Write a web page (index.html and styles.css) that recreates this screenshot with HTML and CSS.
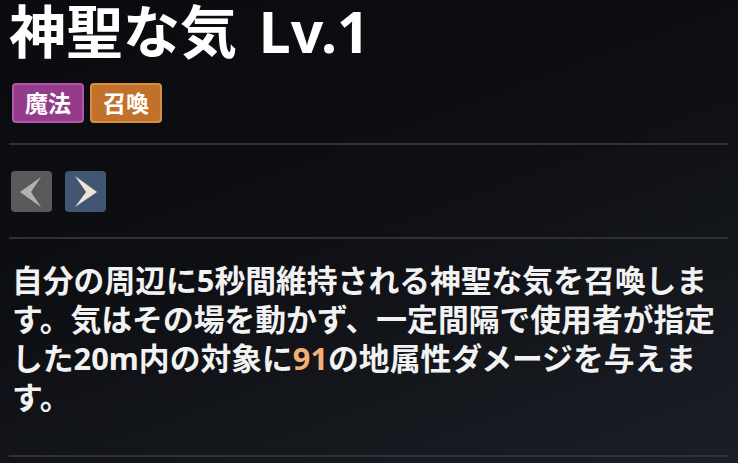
FILE: index.html
```html
<!DOCTYPE html>
<html lang="ja">
<head>
<meta charset="utf-8">
<title>神聖な気 Lv.1</title>
<link rel="stylesheet" href="styles.css">
</head>
<body>
<div class="card">
  <h1 class="title">神聖な気 Lv.1</h1>
  <div class="tags">
    <span class="tag tag-magic">魔法</span>
    <span class="tag tag-summon">召喚</span>
  </div>
  <div class="sep"></div>
  <div class="nav">
    <button class="nav-btn nav-prev" aria-label="前へ">
      <svg width="41" height="41" viewBox="0 0 41 41"><polygon points="30,6 9,21 30,36 20,21" fill="#b3b3b3"/></svg>
    </button>
    <button class="nav-btn nav-next" aria-label="次へ">
      <svg width="41" height="41" viewBox="0 0 41 41"><polygon points="10,5 32,21 10,36 21,21" fill="#ebe5d6"/></svg>
    </button>
  </div>
  <div class="sep"></div>
  <p class="desc">自分の周辺に5秒間維持される神聖な気を召喚します。気はその場を動かず、一定間隔で使用者が指定した20m内の対象に<span class="num">91</span>の地属性ダメージを与えます。</p>
  <div class="sep"></div>
</div>
</body>
</html>
```

FILE: styles.css
```css
html, body {
  margin: 0;
  padding: 0;
  height: 100%;
}
body {
  background: linear-gradient(160deg, #0a0b0e 0%, #0d0f13 45%, #1b1e25 100%);
  font-family: "Noto Sans", "Noto Sans CJK JP", sans-serif;
  color: #f2f2f2;
  overflow: hidden;
}
.card {
  padding: 0 10px 0 9px;
  display: flex;
  flex-direction: column;
}
.title {
  margin: 0;
  font-size: 57px;
  line-height: 62px;
  font-weight: 700;
  color: #ffffff;
  white-space: nowrap;
  word-spacing: 7px;
}
.tags {
  display: flex;
  gap: 6px;
  margin: 21px 0 0 3px;
}
.tag {
  display: inline-block;
  height: 36px;
  line-height: 36px;
  padding: 0 11px;
  border: 2px solid;
  border-radius: 4px;
  font-size: 23px;
  font-weight: 700;
  color: #ffffff;
}
.tag-magic {
  background: #943b8b;
  border-color: #b357a8;
}
.tag-summon {
  background: #c1712a;
  border-color: #d98e3f;
}
.sep {
  height: 2px;
  background: #2f3136;
}
.tags + .sep {
  margin-top: 20px;
}
.nav {
  display: flex;
  gap: 13px;
  margin: 26px 0 25px 2px;
}
.nav-btn {
  width: 41px;
  height: 41px;
  padding: 0;
  border: none;
  border-radius: 4px;
  display: flex;
  align-items: center;
  justify-content: center;
}
.nav-btn svg {
  display: block;
}
.nav-prev {
  background: #5a5a5b;
}
.nav-next {
  background: #425674;
}
.desc {
  margin: 22px 0 38px 0;
  padding: 0 0 0 3px;
  font-size: 30.8px;
  line-height: 39px;
  font-weight: 700;
  color: #f2f2f2;
}
.num {
  color: #f2b077;
}
```
